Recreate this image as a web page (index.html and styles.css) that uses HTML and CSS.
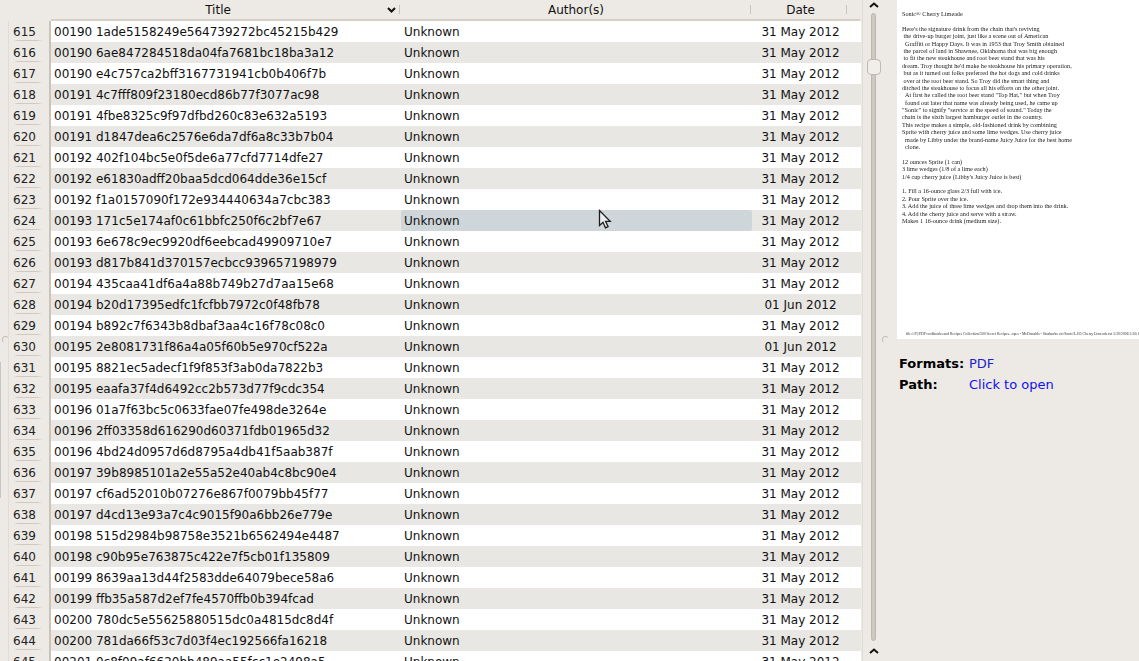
FILE: index.html
```html
<!DOCTYPE html>
<html lang="en">
<head>
<meta charset="utf-8">
<title>Library</title>
<link rel="stylesheet" href="styles.css">
</head>
<body>
<div class="app">
  <div class="library">
    <div class="header">
      <div class="corner"></div>
      <div class="hcell h-title">Title<svg class="sort" width="9" height="6" viewBox="0 0 9 6"><path d="M1 1l3.500 3.500L8 1" fill="none" stroke="#111" stroke-width="2"/></svg></div>
      <div class="hcell h-author">Author(s)</div>
      <div class="hcell h-date">Date</div>
    </div>
    <div class="rows">
      <div class="row"><div class="num">615</div><div class="title">00190 1ade5158249e564739272bc45215b429</div><div class="author">Unknown</div><div class="date">31 May 2012</div></div>
      <div class="row alt"><div class="num">616</div><div class="title">00190 6ae847284518da04fa7681bc18ba3a12</div><div class="author">Unknown</div><div class="date">31 May 2012</div></div>
      <div class="row"><div class="num">617</div><div class="title">00190 e4c757ca2bff3167731941cb0b406f7b</div><div class="author">Unknown</div><div class="date">31 May 2012</div></div>
      <div class="row alt"><div class="num">618</div><div class="title">00191 4c7fff809f23180ecd86b77f3077ac98</div><div class="author">Unknown</div><div class="date">31 May 2012</div></div>
      <div class="row"><div class="num">619</div><div class="title">00191 4fbe8325c9f97dfbd260c83e632a5193</div><div class="author">Unknown</div><div class="date">31 May 2012</div></div>
      <div class="row alt"><div class="num">620</div><div class="title">00191 d1847dea6c2576e6da7df6a8c33b7b04</div><div class="author">Unknown</div><div class="date">31 May 2012</div></div>
      <div class="row"><div class="num">621</div><div class="title">00192 402f104bc5e0f5de6a77cfd7714dfe27</div><div class="author">Unknown</div><div class="date">31 May 2012</div></div>
      <div class="row alt"><div class="num">622</div><div class="title">00192 e61830adff20baa5dcd064dde36e15cf</div><div class="author">Unknown</div><div class="date">31 May 2012</div></div>
      <div class="row"><div class="num">623</div><div class="title">00192 f1a0157090f172e934440634a7cbc383</div><div class="author">Unknown</div><div class="date">31 May 2012</div></div>
      <div class="row alt"><div class="num">624</div><div class="title">00193 171c5e174af0c61bbfc250f6c2bf7e67</div><div class="author current">Unknown</div><div class="date">31 May 2012</div></div>
      <div class="row"><div class="num">625</div><div class="title">00193 6e678c9ec9920df6eebcad49909710e7</div><div class="author">Unknown</div><div class="date">31 May 2012</div></div>
      <div class="row alt"><div class="num">626</div><div class="title">00193 d817b841d370157ecbcc939657198979</div><div class="author">Unknown</div><div class="date">31 May 2012</div></div>
      <div class="row"><div class="num">627</div><div class="title">00194 435caa41df6a4a88b749b27d7aa15e68</div><div class="author">Unknown</div><div class="date">31 May 2012</div></div>
      <div class="row alt"><div class="num">628</div><div class="title">00194 b20d17395edfc1fcfbb7972c0f48fb78</div><div class="author">Unknown</div><div class="date">01 Jun 2012</div></div>
      <div class="row"><div class="num">629</div><div class="title">00194 b892c7f6343b8dbaf3aa4c16f78c08c0</div><div class="author">Unknown</div><div class="date">31 May 2012</div></div>
      <div class="row alt"><div class="num">630</div><div class="title">00195 2e8081731f86a4a05f60b5e970cf522a</div><div class="author">Unknown</div><div class="date">01 Jun 2012</div></div>
      <div class="row"><div class="num">631</div><div class="title">00195 8821ec5adecf1f9f853f3ab0da7822b3</div><div class="author">Unknown</div><div class="date">31 May 2012</div></div>
      <div class="row alt"><div class="num">632</div><div class="title">00195 eaafa37f4d6492cc2b573d77f9cdc354</div><div class="author">Unknown</div><div class="date">31 May 2012</div></div>
      <div class="row"><div class="num">633</div><div class="title">00196 01a7f63bc5c0633fae07fe498de3264e</div><div class="author">Unknown</div><div class="date">31 May 2012</div></div>
      <div class="row alt"><div class="num">634</div><div class="title">00196 2ff03358d616290d60371fdb01965d32</div><div class="author">Unknown</div><div class="date">31 May 2012</div></div>
      <div class="row"><div class="num">635</div><div class="title">00196 4bd24d0957d6d8795a4db41f5aab387f</div><div class="author">Unknown</div><div class="date">31 May 2012</div></div>
      <div class="row alt"><div class="num">636</div><div class="title">00197 39b8985101a2e55a52e40ab4c8bc90e4</div><div class="author">Unknown</div><div class="date">31 May 2012</div></div>
      <div class="row"><div class="num">637</div><div class="title">00197 cf6ad52010b07276e867f0079bb45f77</div><div class="author">Unknown</div><div class="date">31 May 2012</div></div>
      <div class="row alt"><div class="num">638</div><div class="title">00197 d4cd13e93a7c4c9015f90a6bb26e779e</div><div class="author">Unknown</div><div class="date">31 May 2012</div></div>
      <div class="row"><div class="num">639</div><div class="title">00198 515d2984b98758e3521b6562494e4487</div><div class="author">Unknown</div><div class="date">31 May 2012</div></div>
      <div class="row alt"><div class="num">640</div><div class="title">00198 c90b95e763875c422e7f5cb01f135809</div><div class="author">Unknown</div><div class="date">31 May 2012</div></div>
      <div class="row"><div class="num">641</div><div class="title">00199 8639aa13d44f2583dde64079bece58a6</div><div class="author">Unknown</div><div class="date">31 May 2012</div></div>
      <div class="row alt"><div class="num">642</div><div class="title">00199 ffb35a587d2ef7fe4570ffb0b394fcad</div><div class="author">Unknown</div><div class="date">31 May 2012</div></div>
      <div class="row"><div class="num">643</div><div class="title">00200 780dc5e55625880515dc0a4815dc8d4f</div><div class="author">Unknown</div><div class="date">31 May 2012</div></div>
      <div class="row alt"><div class="num">644</div><div class="title">00200 781da66f53c7d03f4ec192566fa16218</div><div class="author">Unknown</div><div class="date">31 May 2012</div></div>
      <div class="row"><div class="num">645</div><div class="title">00201 0c8f09af6620bb489aa55fcc1e2498a5</div><div class="author">Unknown</div><div class="date">31 May 2012</div></div>
    </div>
  </div>
  <div class="scrollbar">
    <svg class="arrow" width="10" height="6" viewBox="0 0 10 6"><path d="M1 5l4-3.500L9 5" fill="none" stroke="#111" stroke-width="2"/></svg>
    <div class="track"><div class="thumb"></div></div>
    <svg class="arrow" width="10" height="6" viewBox="0 0 10 6"><path d="M1 5l4-3.500L9 5" fill="none" stroke="#111" stroke-width="2"/></svg>
  </div>
  <div class="side">
    <div class="cover">
      <p class="pg">Sonic® Cherry Limeade</p>
      <p class="pg">Here's the signature drink from the chain that's reviving<br>&nbsp;the drive-up burger joint, just like a scene out of American<br>&nbsp;&nbsp;Graffiti or Happy Days. It was in 1953 that Troy Smith obtained<br>&nbsp;the parcel of land in Shawnee, Oklahoma that was big enough<br>&nbsp;to fit the new steakhouse and root beer stand that was his<br>dream. Troy thought he'd make he steakhouse his primary operation,<br>&nbsp;but as it turned out folks preferred the hot dogs and cold drinks<br>&nbsp;over at the root beer stand. So Troy did the smart thing and<br>ditched the steakhouse to focus all his efforts on the other joint.<br>&nbsp;&nbsp;At first he called the root beer stand "Top Hat," but when Troy<br>&nbsp;&nbsp;found out later that name was already being used, he came up<br>"Sonic" to signify "service at the speed of sound." Today the<br>chain is the sixth largest hamburger outlet in the country.<br>This recipe makes a simple, old-fashioned drink by combining<br>Sprite with cherry juice and some lime wedges. Use cherry juice<br>&nbsp;&nbsp;made by Libby under the brand-name Juicy Juice for the best home<br>&nbsp;&nbsp;clone.</p>
      <p class="pg">12 ounces Sprite (1 can)<br>3 lime wedges (1/8 of a lime each)<br>1/4 cup cherry juice (Libby's Juicy Juice is best)</p>
      <p class="pg">1. Fill a 16-ounce glass 2/3 full with ice.<br>2. Pour Sprite over the ice.<br>3. Add the juice of three lime wedges and drop them into the drink.<br>4. Add the cherry juice and serve with a straw.<br>Makes 1 16-ounce drink (medium size).</p>
      <div class="footer-line">file:///F|/PDFcookbooks and Recipes Collection/300 Secret Recipes...opes - McDonalds - Starbucks etc/Sonic/L.B5 Cherry Limeade.txt 5/30/2006 3:36:16 PM</div>
    </div>
    <div class="meta">
      <div class="meta-row"><b class="label">Formats:</b><span class="link dark">PDF</span></div>
      <div class="meta-row"><b class="label">Path:</b><span class="link">Click to open</span></div>
    </div>
  </div>
</div>
<div class="edge-line"></div>
<div class="grip grip-left"></div>
<div class="grip grip-right"></div>
<svg class="cursor" width="15" height="21" viewBox="0 0 15 21"><path d="M1.500 1.500v15l3.500-3.200 2.500 5.500 2.600-1.100-2.500-5.400h4.600z" fill="#eceeef" stroke="#1c1c1c" stroke-width="1.300" stroke-linejoin="miter"/></svg>
</body>
</html>
```
FILE: styles.css
```css
html, body { margin: 0; height: 100%; overflow: hidden; background: #edeae5; }
body { font-family: "DejaVu Sans", sans-serif; font-size: 13px; color: #111; }
.app { display: flex; height: 661px; width: 1139px; overflow: hidden; }
.library { width: 862px; padding-left: 8px; box-sizing: border-box; flex: none; border-left: 0; font-size: 12px; }
.header { display: flex; height: 21px; line-height: 21px; text-align: center; margin-left: 1px; }
.corner { width: 42px; flex: none; }
.hcell { position: relative; box-sizing: border-box; border-bottom: 2px solid #d5cfc5; }
.h-title { width: 348px; padding-right: 14px; }
.h-author { width: 351px; padding-left: 3px; }
.h-date { width: 110px; padding-right: 9px; }
.h-author, .h-date { background: linear-gradient(#c8c4bc, #c8c4bc) left 5px no-repeat; background-size: 1px 9px; }
.h-date::after { content: ""; position: absolute; left: 96px; top: 5px; width: 1px; height: 9px; background: #c8c4bc; }
.sort { position: absolute; right: 3px; top: 7px; }
.rows { height: 640px; overflow: hidden; border-left: 1px solid #e0dcd6; }
.row { display: flex; height: 21px; line-height: 23px; white-space: nowrap; }
.num { width: 42px; flex: none; box-sizing: border-box; padding-left: 4px; color: #222; border-right: 2px solid #c9c3b8; background: linear-gradient(90deg, transparent 12%, #cfc9bf 22%, #cfc9bf 70%, transparent 85%) left bottom 1px no-repeat; background-size: 100% 1px; }
.title { width: 350px; flex: none; box-sizing: border-box; padding-left: 3px; background: #fff; }
.author { width: 351px; flex: none; box-sizing: border-box; padding-left: 3px; background: #fff; }
.date { width: 109px; flex: none; box-sizing: border-box; padding-right: 12px; text-align: center; background: #fff; }
.alt .title, .alt .author, .alt .date { background: #e8e7e3; }
.alt .author.current { background: #cfd6da; border-radius: 2px; }
.scrollbar { width: 23px; flex: none; display: flex; flex-direction: column; align-items: center; box-sizing: border-box; border-left: 1px solid #e0dcd6; padding-right: 1px; }
.arrow { flex: none; margin: 2px 0 0; }
.track { position: relative; width: 5px; height: 628px; margin: 5px 0 5px; background: #cdc8c0; border: 1px solid #bdb8ae; border-radius: 3px; box-sizing: border-box; }
.thumb { position: absolute; left: -5px; top: 45px; width: 14px; height: 16px; background: #f1eeea; border: 1px solid #bfb9af; border-radius: 4px; box-sizing: border-box; }
.side { flex: 1; min-width: 0; padding-left: 12px; }
.cover { height: 339px; background: #fff; box-sizing: border-box; padding: 10px 0 0 5px; font-family: "Liberation Serif", serif; font-size: 6.2px; line-height: 7.39px; color: #222; position: relative; overflow: hidden; white-space: nowrap; }
.pg { margin: 0 0 7.39px; filter: blur(.35px); }
.footer-line { position: absolute; left: 9px; bottom: 2px; font-size: 3.8px; line-height: 6px; color: #333; filter: blur(.2px); }
.meta { padding: 14px 0 0 2px; }
.meta-row { display: flex; height: 21px; line-height: 21px; }
.label { width: 70px; flex: none; font-weight: bold; color: #000; }
.link { color: #1010f0; }
.link.dark { color: #2222cc; }
.edge-line { position: absolute; left: 0; top: 362px; width: 1px; height: 136px; background: #c9c4bb; }
.grip { position: absolute; top: 336px; width: 5px; height: 5px; border: 1px solid #c4bfb6; border-right-color: transparent; border-bottom-color: transparent; border-radius: 50%; }
.grip-left { left: 2px; }
.grip-right { left: 882px; }
.cursor { position: absolute; left: 598px; top: 209px; }
```
